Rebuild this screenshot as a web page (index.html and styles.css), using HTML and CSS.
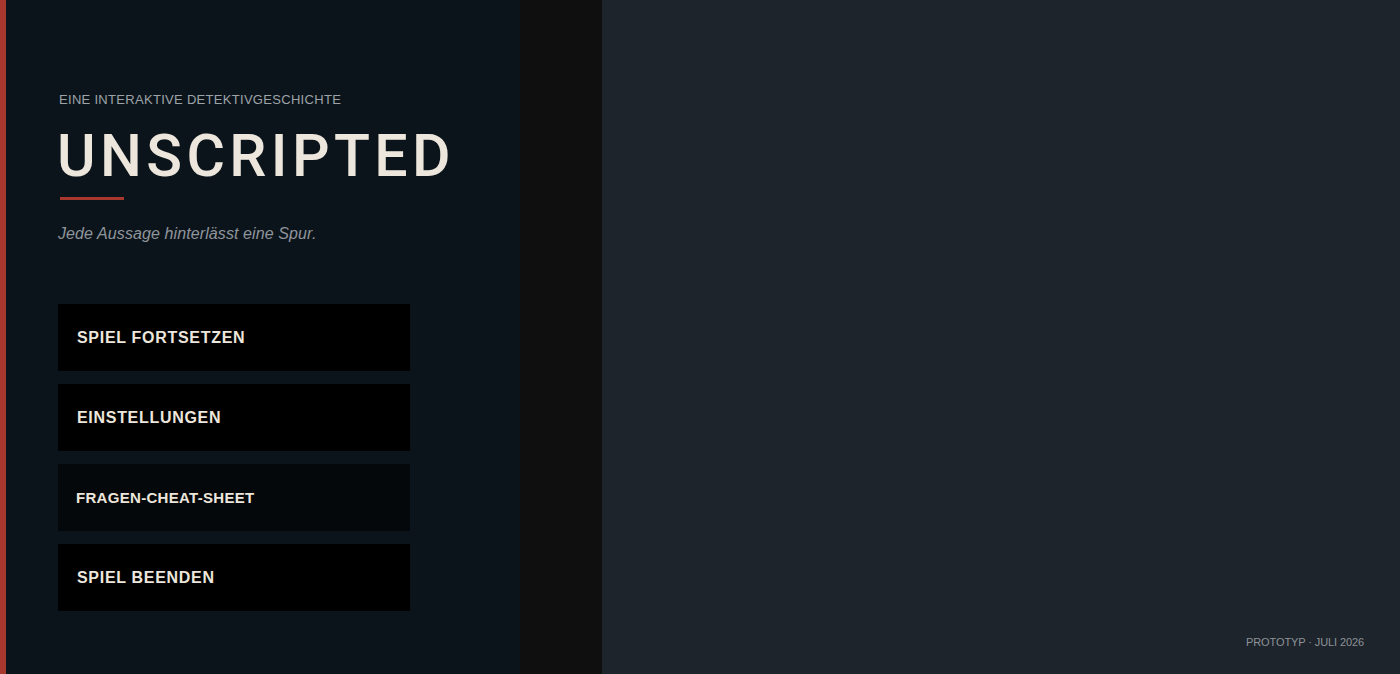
FILE: index.html
```html
<!DOCTYPE html>
<html lang="de">
<head>
<meta charset="utf-8">
<title>Unscripted</title>
<link rel="stylesheet" href="styles.css">
</head>
<body>
<div class="app">
  <aside class="menu">
    <p class="kicker">EINE INTERAKTIVE DETEKTIVGESCHICHTE</p>
    <h1 class="title">UNSCRIPTED</h1>
    <div class="rule"></div>
    <p class="tagline">Jede Aussage hinterlässt eine Spur.</p>
    <nav class="buttons">
      <button class="btn">SPIEL FORTSETZEN</button>
      <button class="btn">EINSTELLUNGEN</button>
      <button class="btn btn-active">FRAGEN-CHEAT-SHEET</button>
      <button class="btn">SPIEL BEENDEN</button>
    </nav>
  </aside>
  <div class="strip"></div>
  <main class="stage">
    <div class="footer">PROTOTYP · JULI 2026</div>
  </main>
</div>
</body>
</html>
```
FILE: styles.css
```css
* { box-sizing: border-box; }
html, body { margin: 0; padding: 0; height: 100%; }
body {
  font-family: "Liberation Sans", Arial, sans-serif;
  background: #1d242b;
  overflow: hidden;
}
.app {
  display: flex;
  height: 674px;
  width: 1400px;
}
.menu {
  width: 520px;
  flex: none;
  background: #0c141b;
  border-left: 6px solid #a8372e;
  padding: 92px 0 0 52px;
  display: flex;
  flex-direction: column;
}
.kicker {
  margin: 0;
  font-size: 13px;
  line-height: 16px;
  letter-spacing: 0.3px;
  color: #9ea3a8;
  padding-left: 1px;
}
.title {
  margin: 18px 0 0 -1px;
  font-family: Roboto, "Liberation Sans", sans-serif;
  font-size: 59px;
  line-height: 59px;
  font-weight: 500;
  letter-spacing: 4.4px;
  color: #ece6dc;
}
.rule {
  width: 64px;
  height: 3px;
  background: #a8372e;
  margin: 12px 0 0 2px;
}
.tagline {
  margin: 24px 0 0 0;
  font-size: 16px;
  line-height: 20px;
  font-style: italic;
  letter-spacing: 0.1px;
  color: #8f959b;
}
.buttons {
  margin-top: 60px;
  display: flex;
  flex-direction: column;
  gap: 13px;
}
.btn {
  width: 352px;
  height: 67px;
  background: #000000;
  border: none;
  text-align: left;
  padding: 0 0 0 19px;
  font-family: "Liberation Sans", Arial, sans-serif;
  font-weight: 700;
  font-size: 16px;
  letter-spacing: 0.7px;
  color: #ece6dc;
  cursor: pointer;
}
.btn-active {
  background: #05080b;
  font-size: 15px;
  letter-spacing: 0.3px;
  padding-left: 18px;
}
.strip {
  width: 82px;
  flex: none;
  background: #0f0f0f;
}
.stage {
  flex: 1;
  background: #1d242b;
  display: flex;
  align-items: flex-end;
  justify-content: flex-end;
  padding: 0 36px 26px 0;
}
.footer {
  font-size: 11px;
  color: #8d9399;
  letter-spacing: -0.1px;
}
```
